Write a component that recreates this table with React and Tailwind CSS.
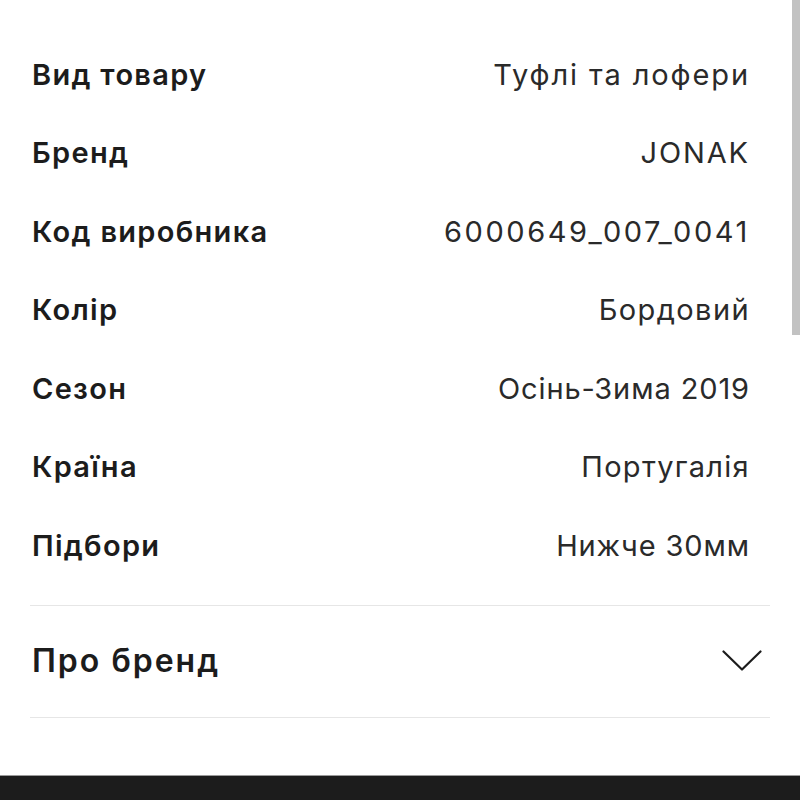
import React from 'react'


const specs = [
    { label: "Вид товару", value: "Туфлі та лофери", track: "tracking-[1.9px]" },
    { label: "Бренд", value: "JONAK", track: "tracking-[1.9px]" },
    { label: "Код виробника", value: "6000649_007_0041", track: "tracking-[2.6px]" },
    { label: "Колір", value: "Бордовий", track: "tracking-[1.4px]" },
    { label: "Сезон", value: "Осінь-Зима 2019", track: "tracking-[0.9px]" },
    { label: "Країна", value: "Португалія", track: "tracking-[1.3px]" },
    { label: "Підбори", value: "Нижче 30мм", track: "tracking-[0.9px]" },
]


const App = () => {

  return (

    <div className="relative w-[800px] h-[800px] bg-white overflow-hidden flex flex-col font-['Inter','Noto_Sans',sans-serif]">

        <div className="px-[30px] pt-[35px]">

            {specs.map((item) => (
                <div key={item.label} className="h-[78.5px] flex items-center justify-between pl-[2px] pr-[20px]">
                    <p className="text-[29px] font-semibold text-[#1c1c1c] tracking-[1.3px]">{item.label}</p>
                    <p className={`text-[29px] font-normal text-[#2a2a2a] ${item.track}`}>{item.value}</p>
                </div>
            ))}

            <div className="mt-[20px] border-t border-[#e6e6e6]" />

            <div className="h-[111px] flex items-center justify-between pl-[2px] pr-[8px]">
                <p className="text-[32px] font-semibold text-[#1c1c1c] tracking-[2px]">Про бренд</p>
                <svg width="40" height="22" viewBox="0 0 40 22" fill="none">
                    <path d="M1.5 1.5 L20 19.5 L38.5 1.5" stroke="#1c1c1c" strokeWidth="2.2" strokeLinecap="round" strokeLinejoin="round" />
                </svg>
            </div>

            <div className="border-t border-[#e6e6e6]" />

        </div>

        <div className="flex-1" />

        <div className="h-[25px] bg-[#1c1c1c] border-t border-[#9a9a9a]" />

        <div className="absolute top-0 right-0 w-[8px] h-[335px] bg-[#c2c2c2]" />

    </div>

  )

}


export default App
